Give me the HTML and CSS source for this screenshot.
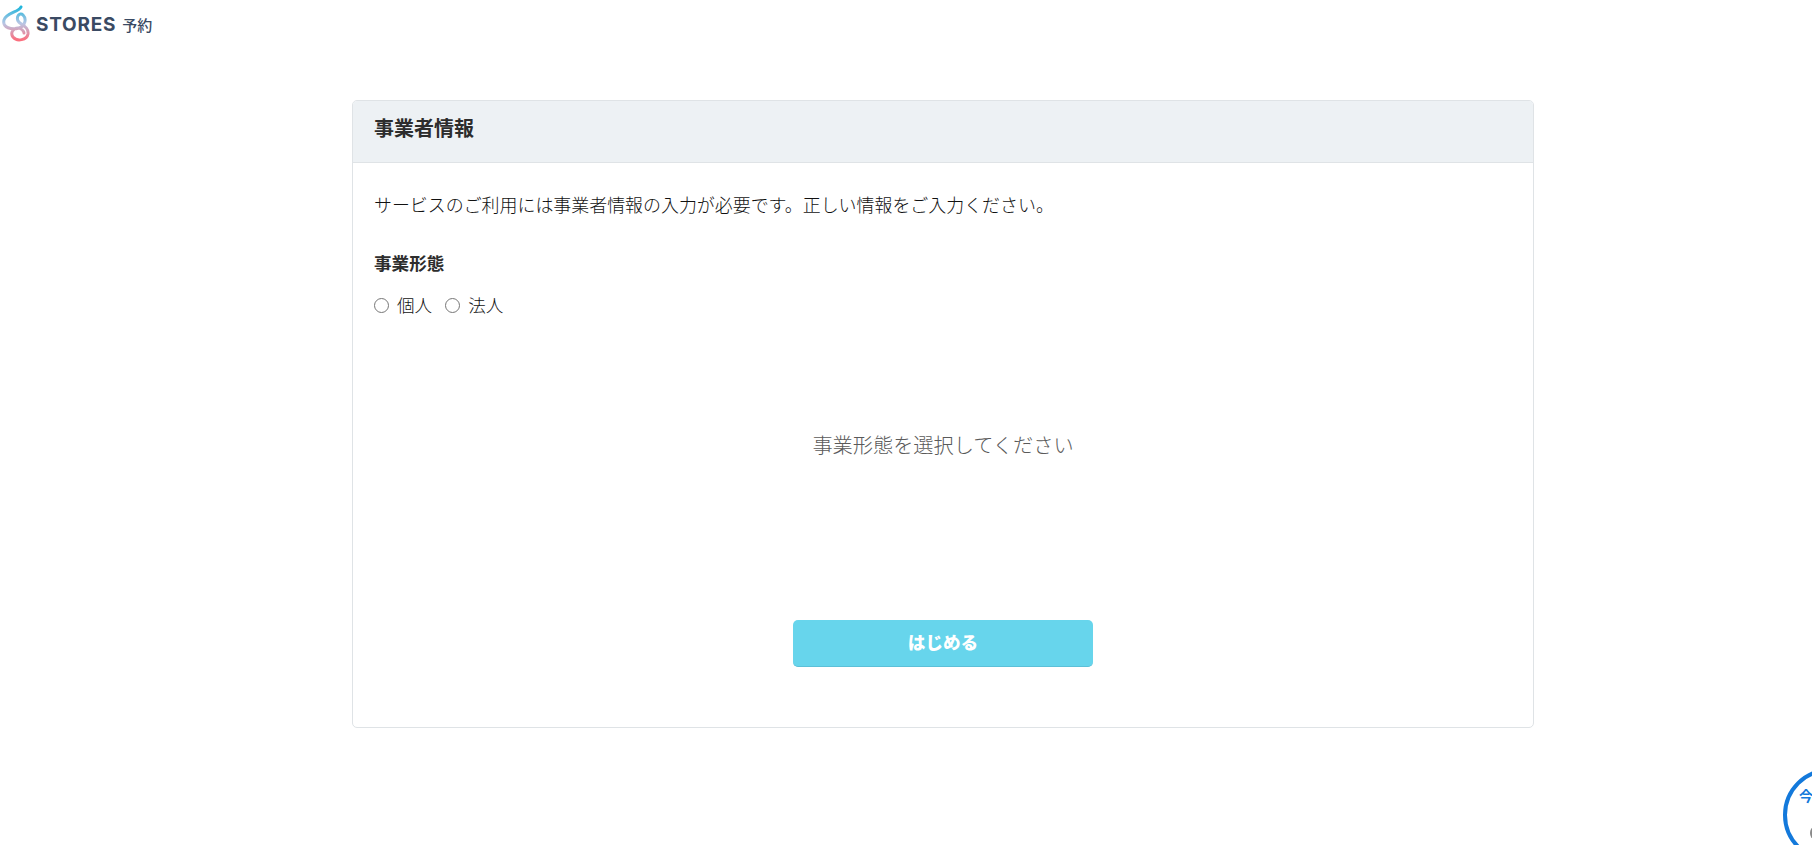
FILE: index.html
```html
<!DOCTYPE html>
<html lang="ja">
<head>
<meta charset="utf-8">
<title>STORES 予約</title>
<link rel="stylesheet" href="styles.css">
</head>
<body>
<header class="topbar">
  <svg class="logo-mark" viewBox="0 0 30 40" width="30" height="40" aria-hidden="true">
    <defs>
      <linearGradient id="lg" x1="0" y1="0" x2="0" y2="1">
        <stop offset="0" stop-color="#1fb6dc"/>
        <stop offset="0.5" stop-color="#b9c6e4"/>
        <stop offset="1" stop-color="#fb6f7e"/>
      </linearGradient>
    </defs>
    <path d="M20 3 C18 8 5 9 3 16 C1 24 11 26 18 24 C24 22 26 15 22 11 C19 8 15 12 17 17 C19 21 28 22 27 30 C26 36 16 38 12 33 C9 29 12 24 17 24 C20 24 23 27 23 29" fill="none" stroke="url(#lg)" stroke-width="3" stroke-linecap="round"/>
  </svg>
  <span class="brand">STORES</span>
  <span class="brand-sub">予約</span>
</header>
<main class="page">
  <section class="card">
    <h1 class="card-title">事業者情報</h1>
    <div class="card-body">
      <p class="lead">サービスのご利用には事業者情報の入力が必要です。正しい情報をご入力ください。</p>
      <h2 class="field-label">事業形態</h2>
      <div class="radios">
        <label class="radio"><input type="radio" name="kind"><span>個人</span></label>
        <label class="radio"><input type="radio" name="kind"><span>法人</span></label>
      </div>
      <p class="hint">事業形態を選択してください</p>
      <div class="actions"><button class="start" type="button">はじめる</button></div>
    </div>
  </section>
</main>
<aside class="badge"><span class="badge-text">今</span><span class="badge-figure"></span></aside>
</body>
</html>
```

FILE: styles.css
```css
* { box-sizing: border-box; }
html, body { height: 100%; }
body {
  margin: 0;
  overflow: hidden;
  background: #fff;
  color: #333;
  font-family: "Noto Sans CJK JP", "Noto Sans", sans-serif;
}
.topbar {
  display: flex;
  align-items: center;
  height: 48px;
  padding-left: 1px;
}
.logo-mark { flex: none; }
.brand {
  margin-left: 5px;
  font-family: Inter, "Liberation Sans", sans-serif;
  font-weight: 700;
  font-size: 19px;
  letter-spacing: 0.75px;
  color: #3a4a63;
}
.brand-sub {
  margin-left: 6px;
  font-size: 15px;
  font-weight: 500;
  color: #3a4a63;
}
.page { padding: 52px 278px 0 352px; }
.card {
  height: 628px;
  border: 1px solid #dfe3e6;
  border-radius: 5px;
  overflow: hidden;
}
.card-title {
  margin: 0;
  height: 62px;
  padding: 0 21px 8px;
  display: flex;
  align-items: center;
  background: #edf1f4;
  border-bottom: 1px solid #dfe3e6;
  font-size: 20px;
  line-height: 1;
  font-weight: 700;
  color: #2d2d2d;
}
.card-body { padding: 0 21px; }
.lead {
  margin: 26px 0 0;
  font-size: 17.95px;
  font-weight: 300;
  line-height: 30px;
  color: #111;
}
.field-label {
  margin: 29px 0 0;
  font-size: 17.6px;
  line-height: 30px;
  font-weight: 700;
  color: #2d2d2d;
}
.radios {
  display: flex;
  gap: 13px;
  margin-top: 12px;
}
.radio {
  display: flex;
  align-items: center;
  gap: 8px;
  font-size: 17.6px;
  font-weight: 300;
  line-height: 30px;
  color: #111;
}
.radio input {
  width: 15px;
  height: 15px;
  margin: 0;
}
.hint {
  margin: 108px 0 0;
  text-align: center;
  font-size: 20.2px;
  font-weight: 300;
  line-height: 34px;
  color: #5a5a5a;
}
.actions {
  display: flex;
  justify-content: center;
  margin-top: 158px;
}
.start {
  width: 300px;
  height: 47px;
  padding: 0 0 3px;
  border: 0;
  border-bottom: 1px solid #5cc0d8;
  border-radius: 5px;
  background: #67d5ec;
  color: #fff;
  font-family: inherit;
  font-size: 17.6px;
  font-weight: 900;
}
.badge {
  position: fixed;
  left: 1783px;
  top: 768px;
  width: 94px;
  height: 94px;
  border: 4px solid #1379db;
  border-radius: 50%;
  background: #fff;
}
.badge-text {
  position: absolute;
  left: 12px;
  top: 13px;
  font-size: 14px;
  line-height: 20px;
  font-weight: 700;
  color: #1379db;
}
.badge-figure {
  position: absolute;
  left: 23px;
  top: 55px;
  width: 8px;
  height: 12px;
  border-radius: 50%;
  background: #8a8a8a;
}
```
